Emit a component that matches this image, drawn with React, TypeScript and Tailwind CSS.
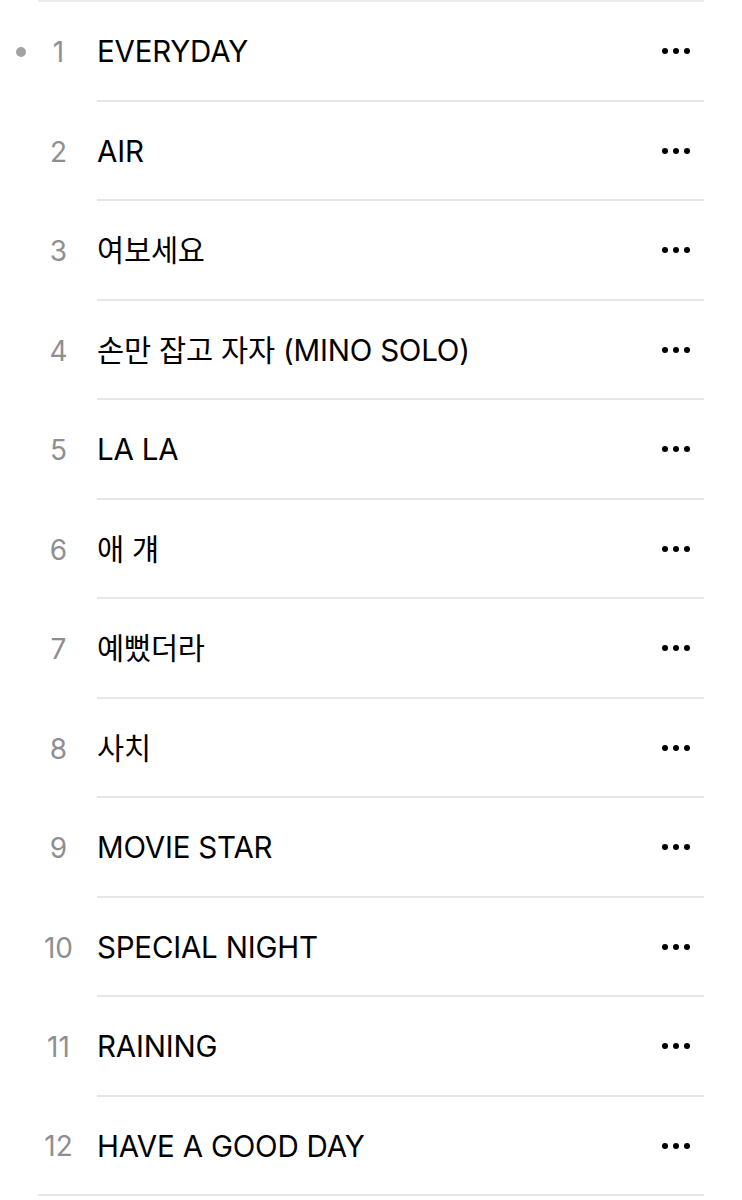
const tracks = [
  'EVERYDAY',
  'AIR',
  '여보세요',
  '손만 잡고 자자 (MINO SOLO)',
  'LA LA',
  '애 걔',
  '예뻤더라',
  '사치',
  'MOVIE STAR',
  'SPECIAL NIGHT',
  'RAINING',
  'HAVE A GOOD DAY',
];

const font = { fontFamily: 'Inter, "Noto Sans CJK KR", sans-serif' };

const MoreDots = () => (
  <div className="flex items-center gap-[5px]">
    <span className="h-[6px] w-[6px] rounded-full bg-black" />
    <span className="h-[6px] w-[6px] rounded-full bg-black" />
    <span className="h-[6px] w-[6px] rounded-full bg-black" />
  </div>
);

export default function App() {
  return (
    <div className="min-h-[1200px] w-[742px] bg-white" style={font}>
      <div className="mx-[38px] h-[2px] bg-[#ececec]" />
      {tracks.map((title, i) => {
        const last = i === tracks.length - 1;
        return (
          <div key={title} className="flex h-[99.5px]">
            <div className="flex w-[38px] shrink-0 items-center pl-[16px] pt-[1px]">
              {i === 0 && <span className="h-[10px] w-[10px] rounded-full bg-[#a3a3a3]" />}
            </div>
            <div className={`mr-[38px] flex flex-1 ${last ? 'border-b-2 border-[#e6e6e6]' : ''}`}>
              <div className="flex w-[41px] shrink-0 items-center justify-center pt-[1px] text-[28px] text-[#8e8e93]">
                {i + 1}
              </div>
              <div
                className={`ml-[18px] flex flex-1 items-center justify-between pr-[14px] pt-[1px] ${
                  last ? '' : 'border-b-2 border-[#e6e6e6]'
                }`}
              >
                <span className="text-[29.5px] tracking-[-0.2px] text-black">{title}</span>
                <MoreDots />
              </div>
            </div>
          </div>
        );
      })}
    </div>
  );
}
